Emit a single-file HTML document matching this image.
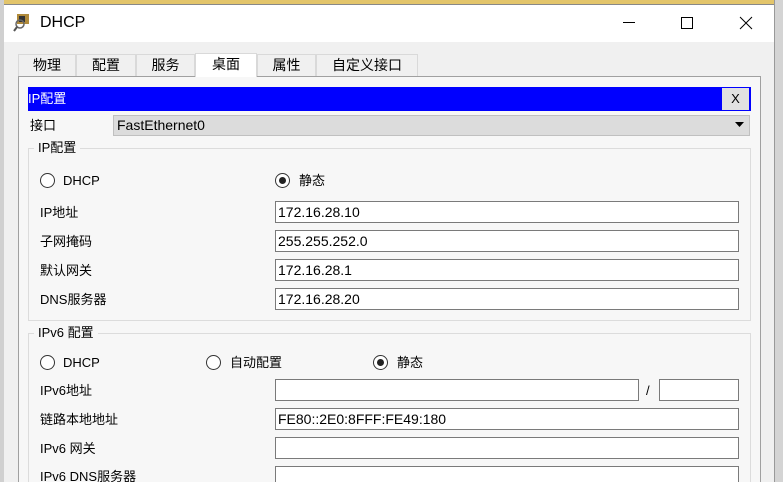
<!DOCTYPE html>
<html style="width:783px;height:482px;overflow:hidden"><head><meta charset="utf-8"><style>
*{margin:0;padding:0;box-sizing:border-box}
html,body{width:783px;height:482px;overflow:hidden}
body{position:relative;background:#f0f0f0;font-family:"Liberation Sans","Noto Sans CJK SC",sans-serif;font-size:13px;color:#000}
.a{position:absolute}
.t{position:absolute;white-space:nowrap;line-height:16px}
.in{position:absolute;background:#fff;border:1px solid #7a7a7a;height:22px;padding-left:2px;line-height:20px;font-size:14px}
.r{position:absolute;width:15px;height:15px;border:1px solid #333;border-radius:50%;background:#fff}
.r.on::after{content:"";position:absolute;left:3px;top:3px;width:7px;height:7px;border-radius:50%;background:#222}
.tab{position:absolute;top:54px;height:22px;border:1px solid #d9d9d9;border-bottom:none;background:#f0f0f0;font-size:14px;text-align:center;line-height:21px}
</style></head><body>
<div class="a" style="left:0;top:0;width:783px;height:4px;background:#e3c56b"></div>
<div class="a" style="left:0;top:0;width:4px;height:482px;background:#d0d0d0"></div>
<div class="a" style="left:774px;top:0;width:9px;height:482px;background:#d4d4d4;border-left:1px solid #999"></div>
<div class="a" style="left:4px;top:4px;width:770px;height:38px;background:#fff;border-top:1px solid #888"></div>
<svg class="a" style="left:13px;top:12px" width="20" height="22" viewBox="0 0 20 22"><rect x="4" y="2" width="12" height="10" fill="#b08a3a"/><rect x="6" y="4" width="6" height="6" fill="#333"/><circle cx="7" cy="12" r="4" fill="none" stroke="#666" stroke-width="1.5"/><line x1="4" y1="15" x2="1" y2="19" stroke="#555" stroke-width="2"/></svg>
<div class="t" style="left:40px;top:15px;font-size:16px">DHCP</div>
<div class="a" style="left:623px;top:22px;width:12px;height:1px;background:#000"></div>
<div class="a" style="left:681px;top:17px;width:12px;height:12px;border:1px solid #000"></div>
<svg class="a" style="left:739px;top:16px" width="14" height="14"><path d="M1 1L13 13M13 1L1 13" stroke="#000" stroke-width="1"/></svg>
<div class="tab" style="left:18px;width:58px">物理</div>
<div class="tab" style="left:76px;width:60px">配置</div>
<div class="tab" style="left:136px;width:59px">服务</div>
<div class="tab" style="left:195px;width:62px;top:53px;height:24px;background:#fff;z-index:2">桌面</div>
<div class="tab" style="left:257px;width:59px">属性</div>
<div class="tab" style="left:316px;width:102px">自定义接口</div>
<div class="a" style="left:18px;top:76px;width:743px;height:406px;background:#f7f7f7;border:1px solid #a0a0a0;border-bottom:none"></div>
<div class="a" style="left:28px;top:87px;width:723px;height:24px;background:#0000ff"></div>
<div class="t" style="left:28px;top:91px;color:#fff">IP配置</div>
<div class="a" style="left:722px;top:88px;width:27px;height:22px;background:#e1e1e1;text-align:center;line-height:22px">X</div>
<div class="t" style="left:30px;top:118px">接口</div>
<div class="a" style="left:113px;top:115px;width:637px;height:21px;background:#dcdcdc;border:1px solid #c0c0c0;padding-left:3px;line-height:19px;font-size:14px">FastEthernet0</div>
<svg class="a" style="left:735px;top:122px" width="10" height="6"><path d="M0 0H9L4.5 5Z" fill="#000"/></svg>
<div class="a" style="left:28px;top:148px;width:723px;height:173px;border:1px solid #dcdcdc"></div>
<div class="t" style="left:34px;top:140px;background:#f7f7f7;padding:0 4px">IP配置</div>
<div class="r" style="left:40px;top:173px"></div><div class="t" style="left:63px;top:173px">DHCP</div>
<div class="r on" style="left:275px;top:173px"></div><div class="t" style="left:299px;top:173px">静态</div>
<div class="t" style="left:40px;top:205px">IP地址</div><div class="in" style="left:275px;top:201px;width:464px">172.16.28.10</div>
<div class="t" style="left:40px;top:234px">子网掩码</div><div class="in" style="left:275px;top:230px;width:464px">255.255.252.0</div>
<div class="t" style="left:40px;top:263px">默认网关</div><div class="in" style="left:275px;top:259px;width:464px">172.16.28.1</div>
<div class="t" style="left:40px;top:292px">DNS服务器</div><div class="in" style="left:275px;top:288px;width:464px">172.16.28.20</div>
<div class="a" style="left:28px;top:333px;width:723px;height:149px;border:1px solid #dcdcdc;border-bottom:none"></div>
<div class="t" style="left:34px;top:325px;background:#f7f7f7;padding:0 4px">IPv6 配置</div>
<div class="r" style="left:40px;top:355px"></div><div class="t" style="left:63px;top:355px">DHCP</div>
<div class="r" style="left:206px;top:355px"></div><div class="t" style="left:230px;top:355px">自动配置</div>
<div class="r on" style="left:373px;top:355px"></div><div class="t" style="left:397px;top:355px">静态</div>
<div class="t" style="left:40px;top:383px">IPv6地址</div><div class="in" style="left:275px;top:379px;width:364px"></div>
<div class="t" style="left:646px;top:383px">/</div><div class="in" style="left:659px;top:379px;width:80px"></div>
<div class="t" style="left:40px;top:412px">链路本地地址</div><div class="in" style="left:275px;top:408px;width:464px">FE80::2E0:8FFF:FE49:180</div>
<div class="t" style="left:40px;top:441px">IPv6 网关</div><div class="in" style="left:275px;top:437px;width:464px"></div>
<div class="t" style="left:40px;top:469px">IPv6 DNS服务器</div><div class="in" style="left:275px;top:466px;width:464px;height:16px;border-bottom:none"></div>
</body></html>
